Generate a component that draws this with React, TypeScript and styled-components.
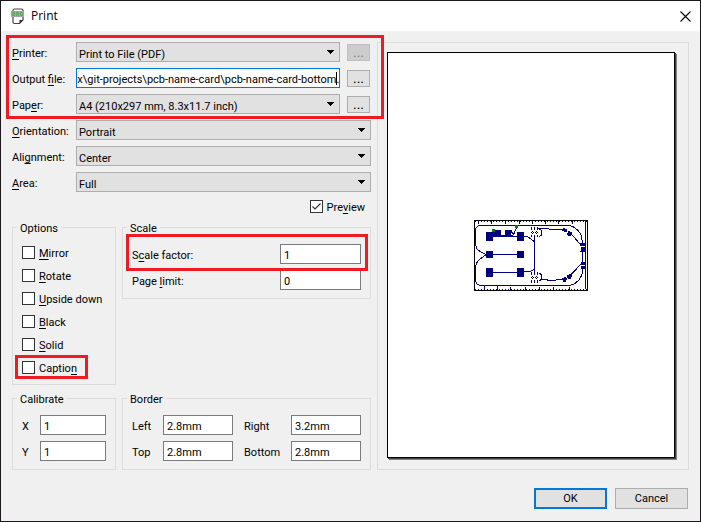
import React, { useLayoutEffect, useRef } from "react";
import styled, { createGlobalStyle, css } from "styled-components";

const GlobalStyle = createGlobalStyle`
  *, *::before, *::after { box-sizing: border-box; }
  body { margin: 0; background: #f0f0f0; }
  body, button, input, select {
    font-family: Roboto, "Open Sans", sans-serif;
    font-size: 11px;
    line-height: 16px;
    color: #000;
  }
`;

const Dialog = styled.main`
  display: flex;
  flex-direction: column;
  min-height: 100vh;
  border: 1px solid #1b171b;
  background: #f0f0f0;
`;

const TitleBar = styled.header`
  display: flex;
  align-items: center;
  height: 30px;
  padding: 0 9px 0 10px;
  background: #fff;
`;

const Title = styled.h1`
  flex: 1;
  margin: 0 0 0 6px;
  font: 400 12px/16px "Open Sans", sans-serif;
`;

const CloseButton = styled.button`
  display: flex;
  padding: 0;
  border: 0;
  background: none;
`;

const Content = styled.form`
  display: flex;
  flex: 1;
  flex-direction: column;
  gap: 18px;
  padding: 11px 11px 12px;
`;

const Columns = styled.div`
  display: grid;
  flex: 1;
  grid-template-columns: minmax(0, 359fr) minmax(0, 312fr);
  gap: 6px;
`;

const Stack = styled.div`
  display: flex;
  flex-direction: column;
  gap: 6px;
`;

const highlight = css`
  position: relative;
  &::after {
    content: "";
    position: absolute;
    border: 3px solid #ed1c24;
    pointer-events: none;
  }
`;

const FileFields = styled(Stack)`
  ${highlight}
  &::after { inset: -7px -13px -5px -6px; }
`;

const FieldRow = styled.div`
  display: flex;
  align-items: center;
  height: 20px;
`;

const FieldLabel = styled.label`
  width: 64px;
  padding-top: 4px;
  white-space: nowrap;
`;

const Key = styled.span`
  text-decoration: underline;
  text-underline-offset: 2px;
  text-decoration-thickness: 1px;
  text-decoration-skip-ink: none;
`;

const SelectBox = styled.div`
  display: grid;
  flex: 1;
  min-width: 0;
  align-items: center;
  > * { grid-area: 1 / 1; }
  > svg {
    justify-self: end;
    margin-right: 6px;
    pointer-events: none;
  }
`;

const Select = styled.select`
  appearance: none;
  width: 100%;
  height: 20px;
  padding: 4px 16px 0 2px;
  border: 1px solid #adadad;
  border-radius: 0;
  background: #e1e1e1;
`;

const TextBox = styled.input`
  width: 100%;
  min-width: 0;
  height: 20px;
  padding: 3px 3px 0;
  border: 1px solid #7a7a7a;
  border-radius: 0;
  outline: 0;
  background: #fff;
`;

const PathField = styled.div`
  position: relative;
  flex: 1;
  min-width: 0;
  height: 20px;
`;

const PathBox = styled(TextBox)`
  padding: 3px 0 0;
  border-color: #0078d7;
`;

const Caret = styled.span`
  position: absolute;
  top: 4px;
  right: 3px;
  width: 1px;
  height: 13px;
  background: #000;
`;

const MoreButton = styled.button`
  width: 23px;
  height: 17px;
  margin: 0 1px 0 7px;
  padding: 0;
  border: 1px solid #adadad;
  background: #e1e1e1;
  font-size: 14px;
  line-height: 14px;
  &:disabled {
    border-color: #bfbfbf;
    background: #ccc;
    color: #838383;
  }
`;

const CheckLabel = styled.label<{ $marked?: boolean }>`
  display: flex;
  align-items: center;
  height: 17px;
  white-space: nowrap;
  > span:last-child { padding-top: 2px; }
  ${(p) =>
    p.$marked &&
    css`
      ${highlight}
      &::after { inset: -4px 18px -3px -7px; }
    `}
`;

const CheckBox = styled.span`
  display: grid;
  margin-right: 4px;
  > * { grid-area: 1 / 1; }
  > svg { display: none; pointer-events: none; }
  > input:checked + svg { display: block; }
`;

const CheckInput = styled.input`
  appearance: none;
  width: 13px;
  height: 13px;
  margin: 0;
  border: 1px solid #333;
  background: #fff;
`;

const PreviewRow = styled.div`
  display: flex;
  justify-content: flex-end;
  padding-right: 6px;
`;

const GroupGrid = styled.div`
  display: grid;
  grid-template-columns: minmax(0, 104fr) minmax(0, 249fr);
  align-items: start;
  gap: 7px 6px;
`;

const Group = styled.fieldset`
  min-width: 0;
  margin: 0;
  padding: 10px 9px 8px;
  border: 1px solid #dcdcdc;
`;

const Legend = styled.legend`
  margin-left: -5px;
  padding: 2px 3px 0;
  line-height: 11px;
`;

const Pairs = styled.div<{ $columns: string }>`
  display: grid;
  grid-template-columns: ${(p) => p.$columns};
  align-items: center;
  row-gap: 6px;
`;

const PairLabel = styled.label<{ $inset?: boolean }>`
  padding: 3px 0 0 ${(p) => (p.$inset ? 11 : 0)}px;
  white-space: nowrap;
`;

const ScaleRow = styled.div<{ $marked?: boolean }>`
  display: grid;
  grid-template-columns: 1fr 81px;
  align-items: center;
  ${(p) =>
    p.$marked &&
    css`
      ${highlight}
      &::after { inset: -10px -7px -7px -6px; }
    `}
`;

const ScaleLabel = styled.label`
  padding-top: 4px;
`;

const PreviewPane = styled.section`
  display: flex;
  padding: 9px 13px 11px 9px;
  border: 1px solid #dcdcdc;
`;

const Sheet = styled.div`
  display: flex;
  flex: 1;
  align-items: center;
  justify-content: center;
  border: 1px solid #000;
  background: #fff;
  box-shadow: 1px 1px 0 #444, 2px 2px 0 #808080;
`;

const Footer = styled.footer`
  display: flex;
  justify-content: flex-end;
  gap: 8px;
  padding-right: 1px;
`;

const ActionButton = styled.button<{ $primary?: boolean }>`
  width: 73px;
  height: 21px;
  padding: 1px 0 0;
  border: ${(p) => (p.$primary ? "2px solid #0078d7" : "1px solid #adadad")};
  background: #e1e1e1;
`;

const Arrow = () => (
  <svg width="7" height="4" viewBox="0 0 7 4" shapeRendering="crispEdges">
    <path d="M0 0h7v1H6v1H5v1H4v1H3V3H2V2H1V1H0z" />
  </svg>
);

const Tick = () => (
  <svg width="13" height="13" viewBox="0 0 13 13">
    <path d="M2.5 6.5L5 9L10.5 3.5" fill="none" stroke="#333" strokeWidth="1.2" />
  </svg>
);

const BoardFileIcon = () => (
  <svg width="14" height="17" viewBox="0 0 14 17">
    <path
      d="M3.5 1h7Q12 1 12 2.5V12L8.5 15.5h-5Q2 15.5 2 14V2.5Q2 1 3.5 1z"
      fill="#fff"
      stroke="#444"
      strokeWidth="1.2"
    />
    <path d="M8.5 15.5V12H12z" fill="#333" />
    <rect y="3" width="13" height="6" fill="#a6a6a6" />
    <path
      d="M1.500 4.500V7.500H3.500V4.500zM1.500 6H3.500M5.500 8V4.500H7.500V6H5.500M7.500 6.500V8M9.500 4.500V7.500H11.500V4.500z"
      fill="none"
      stroke="#5cab62"
    />
  </svg>
);

const Board = () => (
  <svg
    width="114"
    height="71"
    viewBox="27 30 342 213"
    shapeRendering="crispEdges"
    role="img"
    aria-label="Board preview"
  >
    <g fill="none" stroke="#000080" strokeWidth="3">
      <path d="M40 46.500H313L328 52L340 62L349 76L352.500 99M31.500 56L40 46.500M31.500 56V105L36 117L49 127L64 133.500M64 133.500L44 148L34 160L31.500 170V212L36 222L44 226.500H312L328 222L342 210L350 196L354 178" />
      <path d="M84 133.500H157M84 187.500H157M84 79.500H157M73 67.500H86M146 73L154 54M140 66L148 76" />
      <path d="M177 79.500H188L199 88L208.500 95V175L202 182L192 184.500H177M208.500 95V187M208.500 79V95" />
      <path d="M218 55.500H250L256 58.500H294M320 73L349 107M229.500 61V75L221 82M218 55.500L229.500 61" />
      <path d="M229 208.500H247V211.500H270L276 208.500H296M318 194L350 160M221 188L229.500 194V208L221 214" />
      <path d="M345 123.500H361M361.500 34V237M352.500 123.500V155" />
      <path d="M30 34.500H366" strokeDasharray="3 6" />
      <path d="M30 238.500H366" strokeDasharray="3 6" />
      <path d="M40.500 33V43M79.500 33V43M121.500 33V43M163.500 33V43M202.500 33V43M241.500 33V43M280.500 33V43M322.500 33V43M58.500 228V240M97.500 228V240M136.500 231V240M181.500 231V240M223.500 231V240M265.500 231V240M313.500 231V240" />
      <path d="M199.500 51V60M208.500 51V60M217.500 51V60M199.500 75V81M208.500 75V81M217.500 75V81M199.500 186V195M208.500 186V195M217.500 186V195M199.500 210V219M208.500 210V219M217.500 210V219" />
    </g>
    <g fill="#000080">
      <path d="M63 66h21v27H63zM156 66h21v27h-21zM63 123h21v21H63zM156 123h21v21h-21zM63 174h21v27H63zM156 174h21v27h-21z" />
      <path d="M87 60h21v15H87zM120 60h21v6h-3v9h-18zM84 69h24v9H84zM108 75h36v3h-36zM129 66h15v3h-15z" />
      <path d="M345 99h15v9h-15zM348 111h12v12h-12zM348 156h15v9h-15zM348 168h12v9h-12z" />
      <path d="M294 54h6v3h6v9h-9v-3h-6v-6h3zM309 63h6v3h6v6h-3v6h-9v-3h-3v-6h3zM297 201h6v3h3v6h-3v6h-9v-6h-3v-6h6zM312 192h9v9h-3v6h-9v-3h-3v-9h6z" />
    </g>
    <path d="M81 57h9v9h-9zM150 45h9v9h-9z" fill="#008000" />
    <g fill="none" stroke="#000" strokeWidth="3">
      <rect x="28.500" y="31.500" width="339" height="210" />
      <path d="M201 64.500H204M198 67.500H201M204 67.500H207M201 70.500H204M213 64.500H216M210 67.500H213M216 67.500H219M213 70.500H216" />
      <path d="M201 199.500H204M198 202.500H201M204 202.500H207M201 205.500H204M213 199.500H216M210 202.500H213M216 202.500H219M213 205.500H216" />
    </g>
  </svg>
);

type Parts = [string, string, string];

const KeyText = ({ parts: [before, key, after] }: { parts: Parts }) => (
  <span>
    {before}
    <Key>{key}</Key>
    {after}
  </span>
);

const SelectField = ({ id, value }: { id: string; value: string }) => (
  <SelectBox>
    <Select id={id} defaultValue={value}>
      <option>{value}</option>
    </Select>
    <Arrow />
  </SelectBox>
);

const Check = ({ parts, checked, marked }: { parts: Parts; checked?: boolean; marked?: boolean }) => (
  <CheckLabel $marked={marked}>
    <CheckBox>
      <CheckInput type="checkbox" defaultChecked={checked} />
      <Tick />
    </CheckBox>
    <KeyText parts={parts} />
  </CheckLabel>
);

const Pair = ({ id, label, value, inset }: { id: string; label: string; value: string; inset?: boolean }) => (
  <>
    <PairLabel htmlFor={id} $inset={inset}>{label}</PairLabel>
    <TextBox id={id} defaultValue={value} />
  </>
);

const layoutFields: { id: string; parts: Parts; value: string }[] = [
  { id: "orientation", parts: ["", "O", "rientation:"], value: "Portrait" },
  { id: "alignment", parts: ["Ali", "g", "nment:"], value: "Center" },
  { id: "area", parts: ["", "A", "rea:"], value: "Full" },
];

const options: Parts[] = [
  ["", "M", "irror"],
  ["", "R", "otate"],
  ["", "U", "pside down"],
  ["", "B", "lack"],
  ["", "S", "olid"],
];

export default function App() {
  const path = useRef<HTMLInputElement>(null);

  useLayoutEffect(() => {
    if (path.current) path.current.scrollLeft = path.current.scrollWidth;
  }, []);

  return (
    <>
      <GlobalStyle />
      <Dialog>
        <TitleBar>
          <BoardFileIcon />
          <Title>Print</Title>
          <CloseButton type="button" aria-label="Close">
            <svg width="11" height="11" viewBox="0 0 11 11">
              <path d="M.5.5l10 10M10.500.5l-10 10" stroke="#000" strokeWidth="1.1" />
            </svg>
          </CloseButton>
        </TitleBar>
        <Content onSubmit={(e) => e.preventDefault()}>
          <Columns>
            <Stack>
              <FileFields>
                <FieldRow>
                  <FieldLabel htmlFor="printer"><KeyText parts={["", "P", "rinter:"]} /></FieldLabel>
                  <SelectField id="printer" value="Print to File (PDF)" />
                  <MoreButton type="button" disabled aria-label="Printer settings">...</MoreButton>
                </FieldRow>
                <FieldRow>
                  <FieldLabel htmlFor="output"><KeyText parts={["Output ", "f", "ile:"]} /></FieldLabel>
                  <PathField>
                    <PathBox
                      id="output"
                      ref={path}
                      defaultValue={"box\\git-projects\\pcb-name-card\\pcb-name-card-bottom."}
                    />
                    <Caret />
                  </PathField>
                  <MoreButton type="button" aria-label="Browse output file">...</MoreButton>
                </FieldRow>
                <FieldRow>
                  <FieldLabel htmlFor="paper"><KeyText parts={["Pap", "e", "r:"]} /></FieldLabel>
                  <SelectField id="paper" value="A4 (210x297 mm, 8.3x11.7 inch)" />
                  <MoreButton type="button" aria-label="Paper settings">...</MoreButton>
                </FieldRow>
              </FileFields>
              {layoutFields.map((f) => (
                <FieldRow key={f.id}>
                  <FieldLabel htmlFor={f.id}><KeyText parts={f.parts} /></FieldLabel>
                  <SelectField id={f.id} value={f.value} />
                </FieldRow>
              ))}
              <PreviewRow>
                <Check parts={["Pre", "v", "iew"]} checked />
              </PreviewRow>
              <GroupGrid>
                <Group>
                  <Legend>Options</Legend>
                  <Stack>
                    {options.map((parts) => (
                      <Check key={parts[1]} parts={parts} />
                    ))}
                    <Check parts={["Captio", "n", ""]} marked />
                  </Stack>
                </Group>
                <Group>
                  <Legend>Scale</Legend>
                  <Stack>
                    <ScaleRow $marked>
                      <ScaleLabel htmlFor="factor"><KeyText parts={["S", "c", "ale factor:"]} /></ScaleLabel>
                      <TextBox id="factor" defaultValue="1" />
                    </ScaleRow>
                    <ScaleRow>
                      <ScaleLabel htmlFor="limit"><KeyText parts={["Page ", "l", "imit:"]} /></ScaleLabel>
                      <TextBox id="limit" defaultValue="0" />
                    </ScaleRow>
                  </Stack>
                </Group>
                <Group>
                  <Legend>Calibrate</Legend>
                  <Pairs $columns="18px 1fr">
                    <Pair id="cal-x" label="X" value="1" />
                    <Pair id="cal-y" label="Y" value="1" />
                  </Pairs>
                </Group>
                <Group>
                  <Legend>Border</Legend>
                  <Pairs $columns="31px 1fr 58px 1fr">
                    <Pair id="left" label="Left" value="2.8mm" />
                    <Pair id="right" label="Right" value="3.2mm" inset />
                    <Pair id="top" label="Top" value="2.8mm" />
                    <Pair id="bottom" label="Bottom" value="2.8mm" inset />
                  </Pairs>
                </Group>
              </GroupGrid>
            </Stack>
            <PreviewPane>
              <Sheet>
                <Board />
              </Sheet>
            </PreviewPane>
          </Columns>
          <Footer>
            <ActionButton type="submit" $primary>OK</ActionButton>
            <ActionButton type="button">Cancel</ActionButton>
          </Footer>
        </Content>
      </Dialog>
    </>
  );
}
